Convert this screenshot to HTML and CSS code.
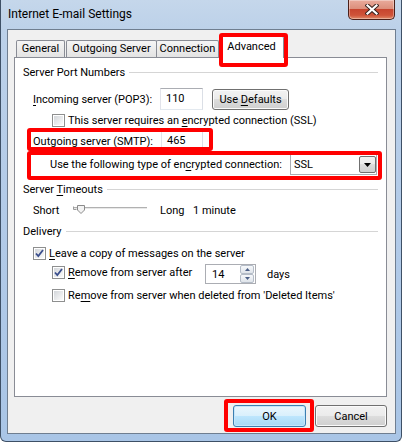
FILE: index.html
```html
<!DOCTYPE html>
<html lang="en">
<head>
    <meta charset="UTF-8">
    <title>Internet E-mail Settings</title>
    <link rel="stylesheet" href="styles.css">
</head>
<body>
    <div class="window">
        <div class="titlebar">
            <span class="title">Internet E-mail Settings</span>
            <button class="close" title="Close">
                <svg width="14" height="11" viewBox="0 0 14 11">
                    <path d="M2.5 1.5L11.5 9.5M11.5 1.5L2.5 9.5" stroke="#3a2521" stroke-width="4.2" stroke-linecap="square"/>
                    <path d="M2.5 1.5L11.5 9.5M11.5 1.5L2.5 9.5" stroke="#fff" stroke-width="2.2" stroke-linecap="square"/>
                </svg>
            </button>
        </div>

        <div class="client">
            <div class="tabs">
                <div class="tab tab-general">General</div>
                <div class="tab tab-outgoing">Outgoing Server</div>
                <div class="tab tab-connection">Connection</div>
                <div class="tab tab-advanced active marked">Advanced</div>
            </div>

            <div class="panel">
                <div class="group-title"><span>Server Port Numbers</span></div>

                <div class="row incoming">
                    <span class="label label-port"><u>I</u>ncoming server (POP3):</span>
                    <span class="textbox port">110</span>
                    <button class="btn defaults">Use <u>D</u>efaults</button>
                </div>

                <div class="row sub">
                    <span class="check"></span>
                    <span class="check-text">This server requires an <u>e</u>ncrypted connection (SSL)</span>
                </div>

                <div class="row outgoing marked">
                    <span class="label label-smtp"><u>O</u>utgoing server (SMTP):</span>
                    <span class="textbox port">465</span>
                </div>

                <div class="row encryption marked">
                    <span class="label label-enc">Use the following type of en<u>c</u>rypted connection:</span>
                    <span class="combo">
                        SSL
                        <span class="combo-arrow">
                            <svg width="7" height="4" viewBox="0 0 7 4"><path d="M0 0h7L3.5 4z" fill="#000"/></svg>
                        </span>
                    </span>
                </div>

                <div class="group-title timeouts"><span>Server <u>T</u>imeouts</span></div>

                <div class="row slider-row">
                    <span class="label label-short">Short</span>
                    <svg class="slider" width="74" height="16" viewBox="0 0 74 16">
                        <rect x="0" y="5" width="74" height="1" fill="#b1b1b1"/>
                        <rect x="0" y="6" width="74" height="1" fill="#e8e8e8"/>
                        <path d="M0.5 4.5v3h3" fill="none" stroke="#9b9b9b"/>
                        <path d="M4.5 3.5h7v4.5l-3.5 3.5l-3.5-3.5z" fill="#f3f3f3" stroke="#8b8b8b"/>
                    </svg>
                    <span class="label label-long">Long</span>
                    <span>1 minute</span>
                </div>

                <div class="group-title delivery"><span>Delivery</span></div>

                <div class="row leave">
                    <span class="check checked">
                        <svg width="9" height="9" viewBox="0 0 9 9"><path d="M1 4.5l2.3 2.6L8 1" fill="none" stroke="#3b4f8d" stroke-width="1.8"/></svg>
                    </span>
                    <span class="check-text"><u>L</u>eave a copy of messages on the server</span>
                </div>

                <div class="row sub remove-after">
                    <span class="check-item">
                        <span class="check checked">
                            <svg width="9" height="9" viewBox="0 0 9 9"><path d="M1 4.5l2.3 2.6L8 1" fill="none" stroke="#3b4f8d" stroke-width="1.8"/></svg>
                        </span>
                        <span class="check-text"><u>R</u>emove from server after</span>
                    </span>
                    <span class="spin">
                        14
                        <span class="spin-buttons">
                            <span class="spin-btn"><svg width="5" height="3" viewBox="0 0 5 3"><path d="M0 3h5L2.5 0z" fill="#4c6087"/></svg></span>
                            <span class="spin-btn"><svg width="5" height="3" viewBox="0 0 5 3"><path d="M0 0h5L2.5 3z" fill="#4c6087"/></svg></span>
                        </span>
                    </span>
                    <span class="days">days</span>
                </div>

                <div class="row sub remove-deleted">
                    <span class="check"></span>
                    <span class="check-text">Re<u>m</u>ove from server when deleted from 'Deleted Items'</span>
                </div>
            </div>

            <div class="actions">
                <button class="btn default marked">OK</button>
                <button class="btn">Cancel</button>
            </div>
        </div>
    </div>
</body>
</html>
```

FILE: styles.css
```css
body {
    margin: 0;
    font-family: "Segoe UI", Roboto, "Liberation Sans", sans-serif;
    font-size: 11px;
    color: #000;
}

u {
    text-decoration-thickness: 1px;
    text-underline-offset: 2px;
}

/* window frame */
.window {
    width: 402px;
    height: 442px;
    box-sizing: border-box;
    display: flex;
    flex-direction: column;
    border: 1px solid #3e5066;
    border-top: 0;
    border-radius: 0 0 6px 6px;
    background: linear-gradient(180deg, #c5d7eb 0, #bcd1e9 30px, #b3cbe8 200px, #a9c5e6 100%);
    overflow: hidden;
}

.titlebar {
    height: 29px;
    flex: none;
    display: flex;
    justify-content: space-between;
    align-items: flex-start;
    padding-left: 7px;
}

.title {
    align-self: center;
    font-size: 12px;
    line-height: 15px;
}

.close {
    width: 47px;
    height: 20px;
    margin-right: 6px;
    padding: 0;
    display: flex;
    align-items: center;
    justify-content: center;
    border: 1px solid #4b2019;
    border-top: 0;
    border-radius: 0 0 5px 5px;
    background: linear-gradient(180deg, #e9ab9c 0%, #dc8f7c 45%, #c7452f 50%, #cf5339 80%, #e08a68 100%);
    box-shadow: inset 0 0 0 1px rgba(255, 255, 255, 0.35);
}

.client {
    flex: 1;
    margin: 0 5px 7px 6px;
    padding: 6px 8px 0 6px;
    display: flex;
    flex-direction: column;
    border: 1px solid #6f7e90;
    background: #f0f0f0;
}

/* tabs */
.tabs {
    position: relative;
    z-index: 1;
    display: flex;
    align-items: flex-end;
    height: 22px;
    margin-bottom: -1px;
    padding-left: 2px;
}

.tab {
    box-sizing: border-box;
    height: 17px;
    margin-bottom: 1px;
    border: 1px solid #898c95;
    border-bottom: 0;
    border-radius: 2px 2px 0 0;
    background: linear-gradient(180deg, #f5f5f5, #e3e3e3);
    text-align: center;
    line-height: 16px;
    white-space: nowrap;
}

.tab-general { width: 49px; }
.tab-outgoing { width: 91px; margin-left: 1px; }
.tab-connection { width: 63px; margin-left: -1px; }

.tab.active {
    width: 65px;
    height: 22px;
    margin-bottom: 0;
    background: #fff;
    line-height: 19px;
}

.panel {
    height: 340px;
    box-sizing: border-box;
    border: 1px solid #898c95;
    background: #fff;
    padding: 8px 8px 0 8px;
}

/* group headers */
.group-title {
    display: flex;
    align-items: center;
    gap: 4px;
    height: 14px;
    line-height: 14px;
    white-space: nowrap;
}

.group-title::after {
    content: "";
    flex: 1;
    border-top: 1px solid #d5d5d5;
    margin-top: -1px;
}

.timeouts { margin-top: 8px; }
.delivery { margin-top: 7px; }

/* rows */
.row {
    position: relative;
    display: flex;
    align-items: center;
    white-space: nowrap;
}

.incoming {
    height: 22px;
    margin-top: 8px;
    padding-left: 10px;
}

.sub {
    height: 16px;
    padding-left: 29px;
}

.row.sub:nth-child(3) { margin-top: 2px; }

.outgoing {
    height: 22px;
    margin-top: 2px;
    padding-left: 10px;
}

.encryption {
    height: 21px;
    margin-top: 2px;
    padding-left: 27px;
}

.slider-row {
    height: 16px;
    margin-top: 5px;
    padding-left: 10px;
}

.leave {
    height: 16px;
    margin-top: 6px;
    padding-left: 10px;
}

.remove-after {
    height: 20px;
    margin-top: 3px;
    align-items: flex-start;
}

.remove-deleted { margin-top: 3px; }

.label-port { width: 127px; }
.label-smtp { width: 128px; }
.label-enc { width: 240px; }
.label-short { width: 40px; }
.label-long { width: 33px; margin-left: 13px; }

/* controls */
.textbox {
    box-sizing: border-box;
    height: 22px;
    border: 1px solid;
    border-color: #abadb3 #dbdfe6 #e3e9ef #e2e3ea;
    background: #fff;
    padding-left: 5px;
    line-height: 20px;
}

.port { width: 43px; }
.outgoing .port { width: 42px; }

.btn {
    box-sizing: border-box;
    height: 22px;
    width: 72px;
    padding: 0;
    border: 1px solid #707070;
    border-radius: 3px;
    background: linear-gradient(180deg, #f2f2f2 0%, #ebebeb 49%, #dddddd 50%, #cfcfcf 100%);
    box-shadow: inset 0 0 0 1px #fbfbfb;
    font: inherit;
    color: #000;
}

.defaults {
    width: 77px;
    height: 21px;
    margin-left: 9px;
}

.btn.default {
    width: 73px;
    border-color: #3c7fb1;
    background: linear-gradient(180deg, #eaf6fd 0%, #d9f0fc 49%, #bee6fd 50%, #a7d9f5 100%);
    box-shadow: inset 0 0 0 1px #c6e6f9;
}

.check {
    box-sizing: border-box;
    flex: none;
    width: 13px;
    height: 13px;
    padding: 1px;
    display: flex;
    align-items: center;
    justify-content: center;
    border: 1px solid #8e8f8f;
    background: linear-gradient(135deg, #d3d6da, #fbfbfb) content-box, #fff;
}

.check-text { margin-left: 3px; }

.check-item {
    display: flex;
    align-items: center;
    width: 153px;
    height: 16px;
}

.combo {
    box-sizing: border-box;
    width: 87px;
    height: 21px;
    display: flex;
    align-items: center;
    justify-content: space-between;
    padding-left: 3px;
    border: 1px solid #abadb3;
    background: #fff;
}

.combo-arrow {
    box-sizing: border-box;
    width: 17px;
    height: 17px;
    display: flex;
    align-items: center;
    justify-content: center;
    border: 1px solid #707070;
    border-radius: 2px;
    background: linear-gradient(180deg, #f2f2f2 0%, #ebebeb 49%, #dddddd 50%, #cfcfcf 100%);
}

.spin {
    box-sizing: border-box;
    width: 51px;
    height: 20px;
    display: flex;
    align-items: center;
    justify-content: space-between;
    padding: 0 1px 0 6px;
    border: 1px solid #abadb3;
    background: #fff;
}

.spin-buttons {
    display: flex;
    flex-direction: column;
}

.spin-btn {
    box-sizing: border-box;
    width: 14px;
    height: 9px;
    display: flex;
    align-items: center;
    justify-content: center;
    border: 1px solid #b4bcc7;
    border-radius: 2px;
    background: linear-gradient(180deg, #f6f8fb, #dfe4ea);
}

.days {
    align-self: center;
    margin-left: 11px;
}

/* footer */
.actions {
    display: flex;
    justify-content: flex-end;
    gap: 9px;
    margin-top: 8px;
}

/* red annotation boxes drawn over the dialog */
.marked { position: relative; }

.marked::after {
    content: "";
    position: absolute;
    box-sizing: border-box;
    border: 4px solid #ff0000;
    border-radius: 3px;
    pointer-events: none;
}

.tab-advanced::after {
    left: -1px;
    top: -4px;
    width: 69px;
    height: 34px;
}

.outgoing::after {
    left: 4px;
    top: -2px;
    width: 186px;
    height: 23px;
}

.encryption::after {
    left: 4px;
    top: -3px;
    width: 355px;
    height: 29px;
}

.btn.default::after {
    left: -10px;
    top: -7px;
    width: 90px;
    height: 33px;
}
```
